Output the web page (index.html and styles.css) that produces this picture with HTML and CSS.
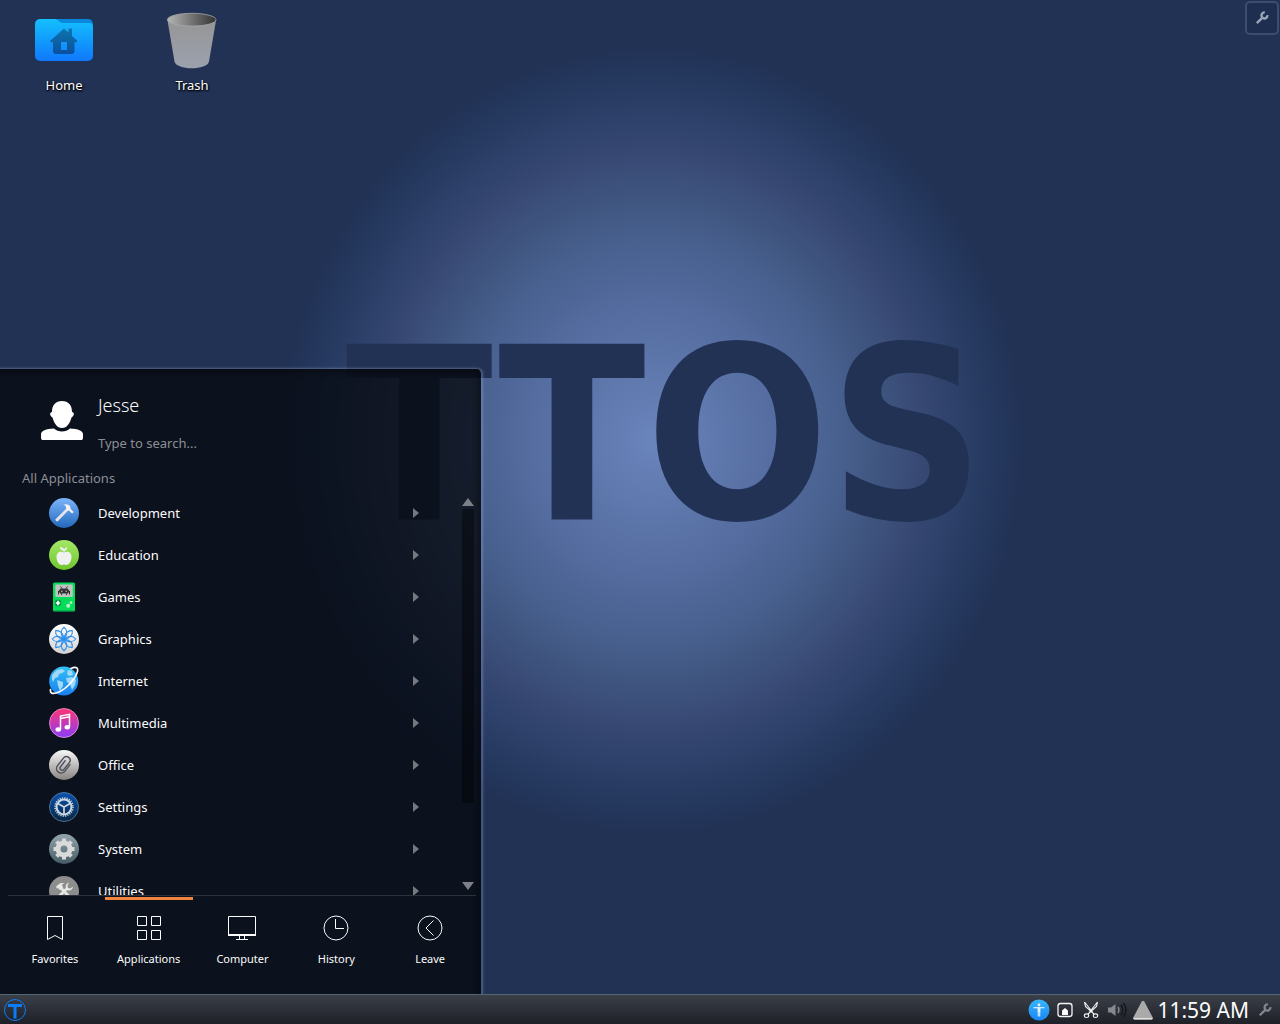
FILE: index.html
```html
<!DOCTYPE html>
<html lang="en">
<head>
<meta charset="utf-8">
<title>Desktop</title>
<meta name="viewport" content="width=device-width, initial-scale=1">
<link rel="stylesheet" href="styles.css">
</head>
<body>
<div class="desktop">
  <div class="wordmark">TTOS</div>

  <main class="workspace">
    <nav class="shortcuts" aria-label="Desktop shortcuts">
      <a class="shortcut" href="#home">
        <svg width="64" height="64" viewBox="0 0 64 64" aria-hidden="true">
          <defs><linearGradient id="folder" x1="0" y1="0" x2="0" y2="1"><stop offset="0" stop-color="#14c0ff"/><stop offset="1" stop-color="#0f78fb"/></linearGradient>
          <linearGradient id="house" x1="0" y1="0" x2="0" y2="1"><stop offset="0" stop-color="#0c76ac"/><stop offset="1" stop-color="#0b4f9f"/></linearGradient></defs>
          <path d="M20 11h36a5 5 0 0 1 5 5v12H20z" fill="#0a86dc"/>
          <path d="M8 11h14c5 0 5 4 9 4h26a4 4 0 0 1 4 4v29a5 5 0 0 1-5 5H8a5 5 0 0 1-5-5V16a5 5 0 0 1 5-5z" fill="url(#folder)"/>
          <path d="M32 20.500l4.500 4v-4H40v7.500l5.500 5-1 1.500-2-.5v9a3 3 0 0 1-3 3H24a3 3 0 0 1-3-3v-9l-2 .5-1-1.500zM29 34v8h6v-8z" fill="url(#house)" fill-rule="evenodd"/>
        </svg>
        <span>Home</span>
      </a>
      <a class="shortcut" href="#trash">
        <svg width="64" height="64" viewBox="0 0 64 64" aria-hidden="true">
          <defs><linearGradient id="bin" x1="0" y1="0" x2="0" y2="1"><stop offset="0" stop-color="#969696"/><stop offset="1" stop-color="#9ba1ad"/></linearGradient>
          <linearGradient id="mouth"><stop offset="0" stop-color="#b5b5b5"/><stop offset="1" stop-color="#333"/></linearGradient></defs>
          <path d="M7.500 12.500l7 41c1.500 9 33 9 34.500 0l7-41z" fill="url(#bin)"/>
          <ellipse cx="31.700" cy="11.700" rx="24.300" ry="6.400" fill="url(#mouth)" stroke="#a8a8a8" stroke-width=".8"/>
        </svg>
        <span>Trash</span>
      </a>
    </nav>
    <button class="toolbox" type="button" aria-label="Desktop toolbox">
      <svg width="14" height="14" viewBox="0 0 14 14" aria-hidden="true"><path d="M1.800 12.200L7.500 6.600M12.400 4.200a3 3 0 0 1-5 2.500M9.800 1.400a3 3 0 0 0-2.500 5" fill="none" stroke="#9ba5b8" stroke-width="2.400"/></svg>
    </button>
  </main>

  <section class="menu" aria-label="Application menu">
    <header class="user">
      <svg class="avatar" width="42" height="40" viewBox="0 0 42 40" aria-hidden="true"><path d="M21 0c6.500 0 10 4 10 11 2.500 0 2.500 4-.5 5.500C29 22 26 27 21 27s-8-5-9.500-10.500c-3-1.500-3-5.500-.5-5.500C11 4 14.500 0 21 0zM13 27.500c4 4 12 4 16 0 8 .5 13 2 13 6V37c0 1.500-1 2-2 2H2c-1 0-2-.5-2-2v-3.500c0-4 5-5.500 13-6z" fill="#fff"/></svg>
      <div class="identity">
        <h1 class="name">Jesse</h1>
        <input class="search" type="text" aria-label="Search" placeholder="Type to search...">
      </div>
    </header>
    <h2 class="heading">All Applications</h2>

    <div class="browser">
      <ul class="apps">
        <li><a class="app" href="#development">
          <svg width="30" height="30" viewBox="0 0 30 30" aria-hidden="true"><defs><linearGradient id="dev" x1="0" y1="0" x2="0" y2="1"><stop offset="0" stop-color="#7db5fb"/><stop offset="1" stop-color="#2268bd"/></linearGradient></defs><circle cx="15" cy="15" r="15" fill="url(#dev)"/><path d="M17.800 10L6.300 21.500q.5 2 2.200 2L20 11.800z" fill="#e3e5ea"/><path d="M14.500 6.800c3-1.300 5-.3 6.700 1.500l.3 2.400 3.200 3.200-1.700 1.700-3-3-1.200-.2-1.800-2.200c.2-1.900-.8-3-2.500-3.400z" fill="#f2f3f5"/></svg>
          <span>Development</span></a></li>
        <li><a class="app" href="#education">
          <svg width="30" height="30" viewBox="0 0 30 30" aria-hidden="true"><defs><linearGradient id="edu" x1="0" y1="0" x2="0" y2="1"><stop offset="0" stop-color="#a4e868"/><stop offset="1" stop-color="#70c62e"/></linearGradient></defs><circle cx="15" cy="15" r="15" fill="url(#edu)"/><path d="M15 12.500c3-1.800 7.500-1 7.500 4.500 0 4-2.500 8-5 8-1.200 0-1.500-.5-2.500-.5s-1.300.5-2.500.5c-2.500 0-5-4-5-8 0-5.500 4.500-6.300 7.500-4.500zM14.700 12c0-1-.7-1.300-1.700-1.700-1.500-.6-2-1.600-2-3.300 2.400 0 3.800 1 4 2.800.5-1.300 1.500-2.300 3.500-2.600-.3 2-1.300 3.100-2.700 3.500l-.3 1.300z" fill="#f1f1f1"/></svg>
          <span>Education</span></a></li>
        <li><a class="app" href="#games">
          <svg width="30" height="30" viewBox="0 0 30 30" aria-hidden="true"><rect x="4" y=".5" width="22" height="29" rx="1.500" fill="#04dc5a"/><path d="M4.500 28.500h21" stroke="#04b84b"/><rect x="6.300" y="2.500" width="17.500" height="12.500" rx="1" fill="#bfc3c0"/><path d="M11.500 4.500l1.500 2M18.500 4.500l-1.500 2M9.500 12.500V9M20.500 12.500V9M12.500 11.500v1.500M17.500 11.500v1.500" stroke="#333" fill="none"/><path d="M11.500 6.500h7l2 2.500-1.500 2.500h-8L9.500 9z" fill="#333"/><path d="M12 8.500h1.500v1.500H12zM16.500 8.500H18v1.500h-1.500z" fill="#999"/><circle cx="9" cy="21" r="3.200" fill="#0a8e40"/><path d="M9 18.800v4.400M6.800 21h4.400" stroke="#fff" stroke-width="1.700"/><circle cx="19.200" cy="23.800" r="2" fill="#b6eec8"/><circle cx="22" cy="20.600" r="1.400" fill="#b6eec8"/></svg>
          <span>Games</span></a></li>
        <li><a class="app" href="#graphics">
          <svg width="30" height="30" viewBox="0 0 30 30" aria-hidden="true"><defs><linearGradient id="gfx" x1="0" y1="0" x2="0" y2="1"><stop offset="0" stop-color="#fff"/><stop offset="1" stop-color="#d2d2d2"/></linearGradient><path id="petal" d="M15 14.500C11 10.500 11.500 6 15 3.200 18.500 6 19 10.500 15 14.500z"/></defs><circle cx="15" cy="15" r="15" fill="url(#gfx)"/><g fill="none" stroke="#2e90ec" stroke-width="1.100"><use href="#petal"/><use href="#petal" transform="rotate(45 15 15)"/><use href="#petal" transform="rotate(90 15 15)"/><use href="#petal" transform="rotate(135 15 15)"/><use href="#petal" transform="rotate(180 15 15)"/><use href="#petal" transform="rotate(225 15 15)"/><use href="#petal" transform="rotate(270 15 15)"/><use href="#petal" transform="rotate(315 15 15)"/></g></svg>
          <span>Graphics</span></a></li>
        <li><a class="app" href="#internet">
          <svg width="30" height="30" viewBox="0 0 30 30" aria-hidden="true"><defs><linearGradient id="net" x1="0" y1="0" x2="0" y2="1"><stop offset="0" stop-color="#31c1f8"/><stop offset="1" stop-color="#187ff0"/></linearGradient></defs><circle cx="14.700" cy="15" r="14.500" fill="url(#net)"/><path d="M3 9l5-5 5-1 3 2-3 2-3 1-1 3-3 1-2 4-1-3zM8 14l6 2 0 4-3 5-2-5zM19 4l4 1 1 4-4 1-2-2zM17 12l6-1 4 3-1 5-3 5-2-6-3-2z" fill="#a2d8f8"/><path d="M22 2.500C27 0 30 1.500 28 7 25 15 15 25 7 27c-4 1-6 0-5.500-3.500" fill="none" stroke="#fff" stroke-width="1.700" stroke-linecap="round"/></svg>
          <span>Internet</span></a></li>
        <li><a class="app" href="#multimedia">
          <svg width="30" height="30" viewBox="0 0 30 30" aria-hidden="true"><defs><linearGradient id="mm" x1="0" y1="0" x2="0" y2="1"><stop offset="0" stop-color="#ff3472"/><stop offset="1" stop-color="#8a3dfb"/></linearGradient></defs><circle cx="15" cy="15" r="14.500" fill="url(#mm)" stroke="#f09ae0" stroke-opacity=".8"/><path d="M11.500 21V8l9-1.700v12.500M11.500 10.500l9-1.800" fill="none" stroke="#fff" stroke-width="1.500"/><ellipse cx="9.300" cy="21.500" rx="2.800" ry="2.200" fill="#fff"/><ellipse cx="18.300" cy="19.300" rx="2.700" ry="2.200" fill="#fff"/></svg>
          <span>Multimedia</span></a></li>
        <li><a class="app" href="#office">
          <svg width="30" height="30" viewBox="0 0 30 30" aria-hidden="true"><defs><linearGradient id="off" x1="0" y1="0" x2="0" y2="1"><stop offset="0" stop-color="#f8f8f8"/><stop offset="1" stop-color="#888481"/></linearGradient></defs><circle cx="15" cy="15" r="15" fill="url(#off)"/><path transform="rotate(38 15 15)" d="M19.500 11v8.500a4.600 4.600 0 0 1-9.200 0V9a3.800 3.800 0 0 1 7.400 0v9.500a2.200 2.200 0 0 1-4.400 0V11" fill="none" stroke="#4c4f5c" stroke-width="1.400" stroke-linecap="round"/></svg>
          <span>Office</span></a></li>
        <li><a class="app" href="#settings">
          <svg width="30" height="30" viewBox="0 0 30 30" aria-hidden="true"><defs><linearGradient id="set" x1="0" y1="0" x2="0" y2="1"><stop offset="0" stop-color="#0a53ac"/><stop offset="1" stop-color="#072644"/></linearGradient></defs><circle cx="15" cy="15" r="14.500" fill="url(#set)" stroke="#5d86ac" stroke-opacity=".8"/><circle cx="15" cy="15" r="9" fill="none" stroke="#ccd6e2" stroke-width="1.600" stroke-dasharray="1.200 1.156"/><circle cx="15" cy="15" r="7.400" fill="none" stroke="#ccd6e2" stroke-width="2"/><path d="M15 15v7M15 15L8.500 11.200M15 15l6.500-3.800" stroke="#ccd6e2" stroke-width="1.700"/></svg>
          <span>Settings</span></a></li>
        <li><a class="app" href="#system">
          <svg width="30" height="30" viewBox="0 0 30 30" aria-hidden="true"><defs><linearGradient id="sys" x1="0" y1="0" x2="0" y2="1"><stop offset="0" stop-color="#93a6ae"/><stop offset="1" stop-color="#455c64"/></linearGradient></defs><circle cx="15" cy="15" r="15" fill="url(#sys)"/><circle cx="15" cy="15" r="6" fill="none" stroke="#dadada" stroke-width="5"/><path d="M15 4.500v3M15 22.500v3M4.500 15h3M22.500 15h3M7.600 7.600l2.100 2.100M20.300 20.300l2.100 2.100M22.400 7.600l-2.100 2.100M9.700 20.300l-2.100 2.100" stroke="#dadada" stroke-width="4"/></svg>
          <span>System</span></a></li>
        <li><a class="app" href="#utilities">
          <svg width="30" height="30" viewBox="0 0 30 30" aria-hidden="true"><circle cx="15" cy="15" r="15" fill="#8d8d8d"/><path d="M8 22.500L18.500 12M22 22.500L11 11" stroke="#e6e6e6" stroke-width="2.800"/><path d="M7 10.500L11.500 7l4 .3-2.800 1.700 1.500 2.200-3 3-2-2-1.200.3zM20 6.500c-3 1-4 3.500-3 6l2 2c2.500.5 4.500-.8 5-4l-2.500 2-2.500-.5-.5-2.500z" fill="#e6e6e6"/></svg>
          <span>Utilities</span></a></li>
      </ul>
      <div class="scrollbar" aria-hidden="true"><span class="up"></span><span class="thumb"></span><span class="down"></span></div>
    </div>

    <nav class="tabs" aria-label="Menu sections">
      <button class="tab" type="button"><svg width="30" height="30" viewBox="0 0 30 30" fill="none" stroke="#fcfcfc" aria-hidden="true"><path d="M7.500 3.500h15v23L15 22.500 7.500 26.500z"/></svg><span>Favorites</span></button>
      <button class="tab tab-active" type="button" aria-pressed="true"><svg width="30" height="30" viewBox="0 0 30 30" fill="none" stroke="#fcfcfc" aria-hidden="true"><path d="M3.500 3.500h9v9h-9zM17.500 3.500h9v9h-9zM3.500 17.500h9v9h-9zM17.500 17.500h9v9h-9z"/></svg><span>Applications</span></button>
      <button class="tab" type="button"><svg width="30" height="30" viewBox="0 0 30 30" fill="none" stroke="#fcfcfc" aria-hidden="true"><path d="M1.500 22V3.500h27V22M12.500 23v3.500M17.500 23v3.500M9 26.500h12"/><path d="M1 22h28" stroke-width="2"/></svg><span>Computer</span></button>
      <button class="tab" type="button"><svg width="30" height="30" viewBox="0 0 30 30" fill="none" stroke="#fcfcfc" aria-hidden="true"><circle cx="15" cy="15" r="12"/><path d="M14.500 6v9.500H23"/></svg><span>History</span></button>
      <button class="tab" type="button"><svg width="30" height="30" viewBox="0 0 30 30" fill="none" stroke="#fcfcfc" aria-hidden="true"><circle cx="15" cy="15" r="12"/><path d="M18.500 7.500L11 15l7.500 7.500"/></svg><span>Leave</span></button>
    </nav>
  </section>

  <footer class="panel">
    <button class="launcher" type="button" aria-label="Application launcher"><svg width="24" height="24" viewBox="0 0 24 24" aria-hidden="true"><circle cx="12" cy="12" r="10.500" fill="none" stroke="#0b7df8"/><path d="M5 7.500h14M12 8v12.500" stroke="#0b7df8" stroke-width="3" fill="none"/></svg></button>
    <div class="tray">
      <button class="status" type="button" aria-label="Accessibility"><svg width="22" height="22" viewBox="0 0 22 22" aria-hidden="true"><defs><linearGradient id="acc" x1="0" y1="0" x2="0" y2="1"><stop offset="0" stop-color="#37b7fb"/><stop offset="1" stop-color="#1a86f5"/></linearGradient></defs><circle cx="11" cy="11" r="10.500" fill="url(#acc)"/><circle cx="11" cy="6" r="1.400" fill="#e4f3ff"/><path d="M5.500 8.700h11" stroke="#e4f3ff" stroke-width="1.200"/><path d="M9.500 8.500h3l-.3 9h-1V13h-.4v4.500h-1z" fill="#e4f3ff"/></svg></button>
      <button class="status" type="button" aria-label="Device notifier"><svg width="22" height="22" viewBox="0 0 22 22" aria-hidden="true"><rect x="4" y="4.500" width="14" height="13" rx="2.500" fill="none" stroke="#f5f5f5" stroke-width="1.300"/><path d="M8 16v-4.500l3-2.500 3 2.500V16z" fill="#fff"/></svg></button>
      <button class="status" type="button" aria-label="Clipboard"><svg width="22" height="22" viewBox="0 0 22 22" aria-hidden="true"><g fill="none" stroke="#f5f5f5" stroke-width="1.100"><path d="M4.500 3l1 4.500 8.500 7.500M17.500 3l-1 4.500L8 15M4.500 3l8 10M17.500 3l-8 10"/><ellipse cx="6.500" cy="16.700" rx="2.200" ry="1.800"/><ellipse cx="15.500" cy="16.700" rx="2.200" ry="1.800"/></g></svg></button>
      <button class="status" type="button" aria-label="Volume"><svg width="22" height="22" viewBox="0 0 22 22" aria-hidden="true"><path d="M2 8.500h3L9.500 5v12L5 13.500H2z" fill="#85888d"/><path d="M12 8q2 3 0 6" fill="none" stroke="#85888d" stroke-width="1.400"/><path d="M15 6q3.500 5 0 10M17.500 4q5 7 0 14" fill="none" stroke="#15171b" stroke-width="1.500"/></svg></button>
      <button class="status" type="button" aria-label="Show hidden icons"><svg width="22" height="22" viewBox="0 0 22 22" aria-hidden="true"><path d="M9.700 2.500q1.300-1.500 2.600 0L21 19q0 1.500-1.500 1.500h-17Q1 20.500 1 19z" fill="#aaa"/><path d="M1.500 19q0 1.500 1.500 1.500h16q1.500 0 1.500-1.500z" fill="#e2e2e2"/></svg></button>
      <time class="clock">11:59 AM</time>
      <button class="configure" type="button" aria-label="Configure panel"><svg width="14" height="14" viewBox="0 0 14 14" aria-hidden="true"><path d="M1.800 12.200L7.500 6.600M12.400 4.200a3 3 0 0 1-5 2.500M9.800 1.400a3 3 0 0 0-2.500 5" fill="none" stroke="#85888d" stroke-width="2.200"/></svg></button>
    </div>
  </footer>
</div>
</body>
</html>
```
FILE: styles.css
```css
* { box-sizing: border-box; }

body {
  margin: 0;
  font-family: "Noto Sans", sans-serif;
  font-size: 13px;
  line-height: 18px;
  color: #fcfcfc;
}

button {
  padding: 0;
  border: 0;
  background: none;
  color: inherit;
  font: inherit;
}

a { color: inherit; text-decoration: none; }
svg { display: block; flex: none; }

.desktop {
  position: relative;
  display: flex;
  flex-direction: column;
  min-height: 100vh;
  overflow: hidden;
  background:
    radial-gradient(370px 394px at 51% 43%,
      #6a85bd 0%,
      #6079ae 16%,
      #546c9f 34%,
      #48608e 51%,
      #3d537d 64%,
      #384974 72%,
      #2d416a 82%,
      #25385e 92%,
      #213255 100%),
    #213255;
}

/* Wallpaper lettering, beneath everything else */
.wordmark {
  position: absolute;
  inset: 0 0 152px;
  display: flex;
  align-items: center;
  justify-content: center;
  padding-left: 50px;
  font-family: "DejaVu Sans Condensed", "DejaVu Sans", sans-serif;
  font-weight: bold;
  font-size: 240px;
  line-height: 280px;
  color: #213255;
}

.workspace {
  position: relative;
  flex: 1;
  display: flex;
  justify-content: space-between;
  align-items: flex-start;
}

.shortcuts { display: flex; }

.shortcut {
  width: 128px;
  padding-top: 8px;
  display: flex;
  flex-direction: column;
  align-items: center;
  gap: 4px;
  text-shadow: 1px 1px 2px #000, 0 1px 2px #000;
}

.toolbox {
  width: 34px;
  height: 34px;
  margin: 1px 1px 0 0;
  display: flex;
  align-items: center;
  justify-content: center;
  border: 2px solid #3d4d6e;
  border-radius: 5px;
  background: #1e2e50;
}

/* Launcher menu, floating over the desktop */
.menu {
  position: absolute;
  left: 0;
  bottom: 30px;
  width: 483px;
  height: 626px;
  display: flex;
  flex-direction: column;
  border: solid rgba(150, 170, 210, .3);
  border-width: 1px 2px 0 0;
  border-radius: 0 6px 0 0;
  background: rgba(5, 8, 13, .77);
  background-clip: padding-box;
  box-shadow: 0 0 3px rgba(130, 150, 190, .4), inset -4px 4px 5px rgba(0, 0, 0, .3);
}

.user {
  display: flex;
  gap: 15px;
  padding: 23px 40px 0 41px;
}

.avatar { margin-top: 9px; }

.identity {
  flex: 1;
  display: flex;
  flex-direction: column;
  gap: 14px;
}

.name {
  margin: 0;
  font-size: 18px;
  font-weight: 300;
  line-height: 26px;
}

.search {
  width: 100%;
  height: 22px;
  padding: 0;
  border: 0;
  background: none;
  color: inherit;
  font: inherit;
}

.search::placeholder { color: #8b8f95; opacity: 1; }

.heading {
  margin: 15px 0 5px 22px;
  font-size: 13px;
  font-weight: 400;
  line-height: 18px;
  color: #8b8f95;
}

.browser {
  flex: 1;
  min-height: 0;
  margin: 0 5px 0 8px;
  display: flex;
  border-bottom: 1px solid #2c313c;
}

.apps {
  flex: 1;
  margin: 0;
  padding: 0;
  list-style: none;
  overflow: hidden;
}

.app {
  height: 42px;
  padding: 0 42px 0 41px;
  display: flex;
  align-items: center;
  gap: 19px;
}

.app::after {
  content: "";
  margin-left: auto;
  border: solid transparent;
  border-width: 5px 0 5px 6px;
  border-left-color: #75797f;
}

.scrollbar {
  width: 13px;
  margin-right: 2px;
  padding: 6px 0 5px;
  display: flex;
  flex-direction: column;
  align-items: center;
}

.up, .down {
  border: 6px solid transparent;
}

.up { border-top: 0; border-bottom: 8px solid #7d8088; }
.down { margin-top: auto; border-bottom: 0; border-top: 8px solid #7d8088; }

.thumb {
  width: 12px;
  height: 75%;
  margin-top: 3px;
  border-radius: 2px;
  background: rgba(0, 0, 0, .4);
}

.tabs {
  height: 98px;
  margin: 0 4px 0 8px;
  display: grid;
  grid-template-columns: repeat(5, 1fr);
}

.tab {
  margin: 1px 3px 0;
  padding-top: 13px;
  display: flex;
  flex-direction: column;
  align-items: center;
  gap: 7px;
  border-top: 3px solid transparent;
  font-size: 11px;
  line-height: 18px;
}

.tab-active { border-top-color: #f2853d; }

.panel {
  position: relative;
  height: 30px;
  padding: 0 8px 0 3px;
  display: flex;
  align-items: center;
  justify-content: space-between;
  border-top: 1px solid #526570;
  background: linear-gradient(#3b3f48, #1d2027);
}

.tray { display: flex; align-items: center; }

.status {
  width: 26px;
  display: flex;
  justify-content: center;
}

.clock {
  margin: 0 9px 0 1px;
  font-size: 21px;
  line-height: 28px;
}
```
